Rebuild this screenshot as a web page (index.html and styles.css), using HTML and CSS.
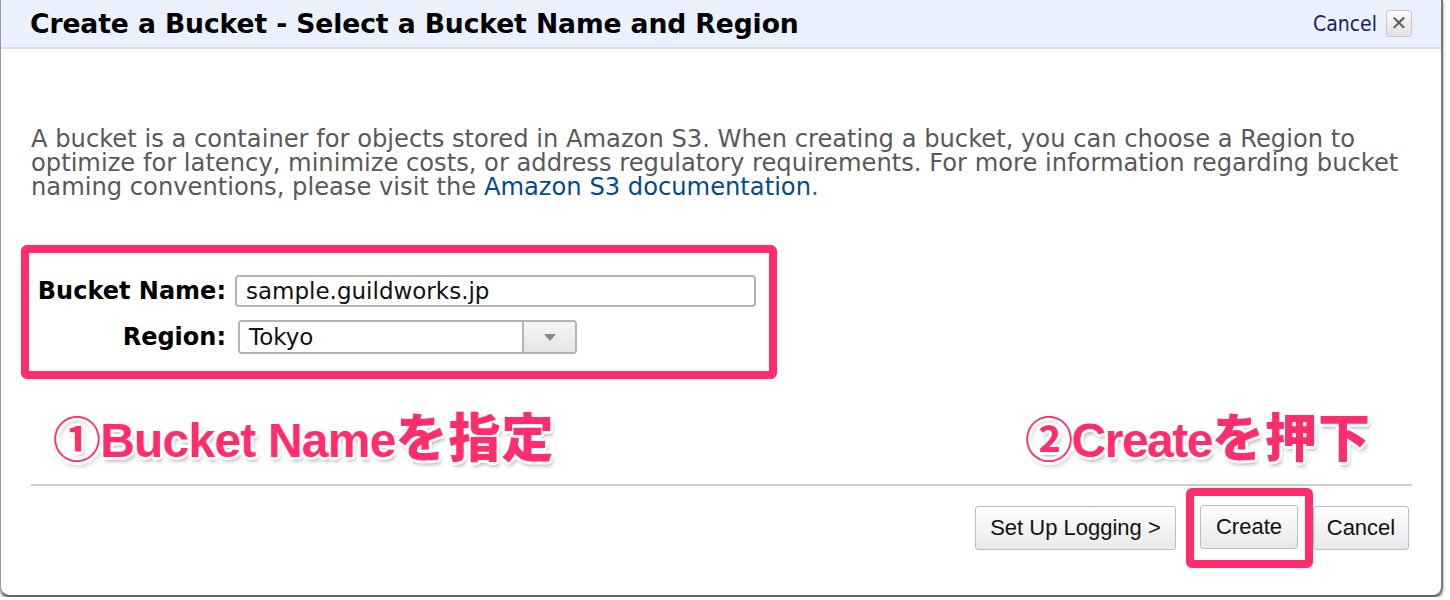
FILE: index.html
```html
<!DOCTYPE html>
<html lang="en">
<head>
  <meta charset="UTF-8">
  <meta name="viewport" content="width=device-width, initial-scale=1.0">
  <title>Create a Bucket</title>
  <link rel="stylesheet" href="styles.css">
</head>
<body>
  <div class="dialog">
    <div class="dialog-header">
      <h1>Create a Bucket - Select a Bucket Name and Region</h1>
      <div class="header-actions">
        <a href="#" class="cancel-link">Cancel</a>
        <button class="close-btn">&#x2715;</button>
      </div>
    </div>

    <div class="dialog-body">
      <p class="intro">A bucket is a container for objects stored in Amazon S3. When creating a bucket, you can choose a Region to optimize for latency, minimize costs, or address regulatory requirements. For more information regarding bucket naming conventions, please visit the <a href="#">Amazon S3 documentation</a>.</p>

      <div class="mark form-box">
        <div class="form-row">
          <label for="bucketName">Bucket Name:</label>
          <input id="bucketName" class="text-input" value="sample.guildworks.jp">
        </div>
        <div class="form-row">
          <label>Region:</label>
          <div class="select-box">
            <span class="select-value">Tokyo</span>
            <span class="select-arrow"></span>
          </div>
        </div>
      </div>

      <div class="notes">
        <span class="note note-first">①Bucket Name<span class="jp">を指定</span></span>
        <span class="note">②Create<span class="jp">を押下</span></span>
      </div>

      <hr class="divider">

      <div class="footer">
        <button class="btn">Set Up Logging &gt;</button>
        <div class="mark create-mark">
          <button class="btn">Create</button>
        </div>
        <button class="btn">Cancel</button>
      </div>
    </div>
  </div>
</body>
</html>
```

FILE: styles.css
```css
body { margin: 0; background: #fff; font-family: "DejaVu Sans", sans-serif; }
.dialog { width: 1443px; height: 597px; background: #fff; border: 1px solid #999; border-top: none; border-right: 2px solid #777; border-bottom: 2px solid #666; border-radius: 0 0 10px 10px; box-shadow: 0 2px 3px rgba(0,0,0,0.5); overflow: hidden; box-sizing: border-box; }

.dialog-header { height: 47px; background: #eaf1fc; border-bottom: 2px solid #cfe0f3; display: flex; align-items: center; justify-content: space-between; padding: 0 29px 0 29px; }
.dialog-header h1 { margin: 0; font-family: "DejaVu Sans", sans-serif; font-weight: bold; font-size: 26.6px; color: #000; letter-spacing: -0.1px; }
.header-actions { display: flex; align-items: center; gap: 9px; }
.cancel-link { font-family: "DejaVu Sans Condensed", "DejaVu Sans", sans-serif; color: #14216b; text-decoration: none; font-size: 21px; }
.close-btn { width: 26px; height: 27px; padding: 0; border: 1px solid #c8c8c8; border-radius: 3px; background: linear-gradient(#fafafa, #e2e2e2); color: #5a5a5a; font-size: 20px; font-weight: bold; line-height: 25px; font-family: "DejaVu Sans", sans-serif; }

.dialog-body { padding: 78px 0 0 0; }
.intro { margin: 0 0 0 30px; width: 1385px; font-family: "DejaVu Sans", sans-serif; font-size: 24.2px; line-height: 24px; color: #595959; }
.intro a { color: #004b91; text-decoration: none; }

.mark { border: 8px solid #ff2d6b; border-radius: 6px; }
.form-box { margin: 46px 0 0 20px; width: 740px; padding: 22px 0 17px 0; display: flex; flex-direction: column; gap: 13px; }
.form-row { display: flex; align-items: center; }
.form-row label { width: 197px; text-align: right; font-family: "DejaVu Sans", sans-serif; font-weight: bold; font-size: 24px; color: #000; }
.text-input { margin-left: 9px; width: 521px; height: 32px; box-sizing: border-box; border: 2px solid #b3b3b3; border-radius: 4px; padding: 0 9px; font-family: "DejaVu Sans", sans-serif; font-size: 23px; color: #111; }
.select-box { margin-left: 12px; width: 339px; height: 34px; box-sizing: border-box; border: 2px solid #b3b3b3; border-radius: 4px; display: flex; overflow: hidden; }
.select-value { flex: 1; padding-left: 9px; font-family: "DejaVu Sans", sans-serif; font-size: 23px; line-height: 30px; color: #111; background: #fff; }
.select-arrow { width: 51px; border-left: 2px solid #b3b3b3; background: linear-gradient(#f7f7f7, #e4e4e4); display: flex; align-items: center; justify-content: center; }
.select-arrow::after { content: ""; border-left: 6px solid transparent; border-right: 6px solid transparent; border-top: 7px solid #888; }

.notes { display: flex; justify-content: space-between; padding: 30px 70px 0 52px; height: 75px; }
.note { font-family: "Liberation Sans", "Noto Sans CJK JP", sans-serif; font-weight: bold; font-size: 48px; letter-spacing: -1.5px; color: #ff2d6b; line-height: 52px;
  text-shadow: 3px 0 0 #fff, -3px 0 0 #fff, 0 3px 0 #fff, 0 -3px 0 #fff, 2px 2px 0 #fff, -2px -2px 0 #fff, 2px -2px 0 #fff, -2px 2px 0 #fff, 2px 4px 4px rgba(0,0,0,0.35); }
.note-first { letter-spacing: -0.8px; }
.note .jp { font-family: "Noto Sans CJK JP", sans-serif; font-weight: 900; font-size: 52px; letter-spacing: 1px; }

.divider { margin: 0 29px 0 30px; border: none; border-top: 2px solid #cdcdcd; }

.footer { display: flex; justify-content: flex-end; align-items: center; padding: 2px 32px 0 0; }
.btn { height: 44px; padding: 0 12px; border: 1px solid #bdbdbd; border-radius: 3px; background: linear-gradient(#fefefe, #e9e9e9); font-family: "Liberation Sans", Arial, sans-serif; font-size: 22px; color: #111; }
.footer > .btn:first-child { width: 201px; margin-right: 10px; }
.create-mark { padding: 9px 7px 11px 6px; }
.create-mark .btn { width: 98px; }
.footer > .btn:last-child { width: 96px; }
```
